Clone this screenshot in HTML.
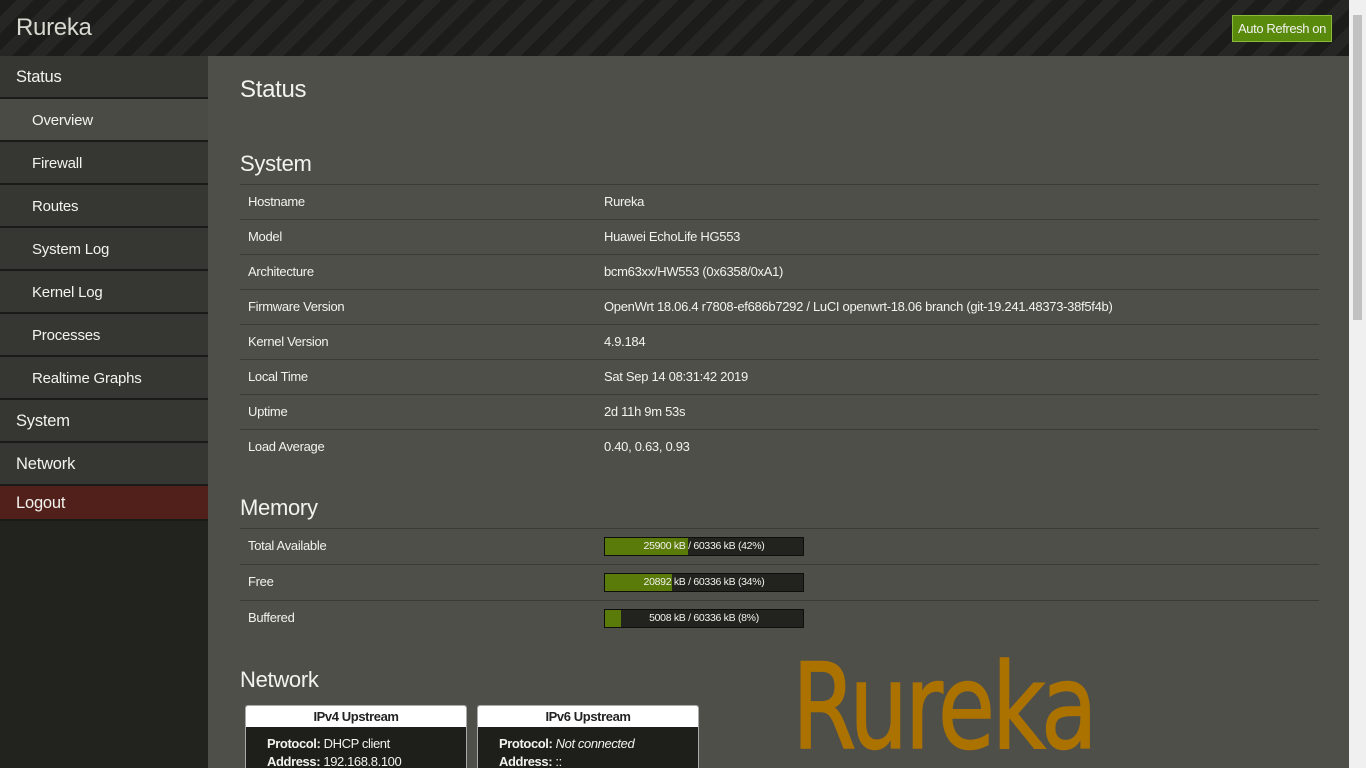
<!DOCTYPE html>
<html><head><meta charset="utf-8"><style>
*{margin:0;padding:0;box-sizing:border-box}
html,body{width:1366px;height:768px;overflow:hidden}
body{background:#4f4f4a;font-family:"Liberation Sans",sans-serif;color:#f2f2ee;position:relative}
.hdr{position:absolute;left:0;top:0;width:1349px;height:56px;background:repeating-linear-gradient(135deg,#1c1c1a 0 12px,#262624 12px 24px)}
.hdr .t{position:absolute;left:16px;top:14px;font-size:24px;color:#d8d8d0;letter-spacing:-.3px}
.btn{position:absolute;left:1232px;top:15px;width:100px;height:27px;background:#5a8a0c;border:1px solid #8bbb3a;color:#f2f2ee;font-size:13px;line-height:25px;text-align:center;letter-spacing:-.4px}
.side{position:absolute;left:0;top:56px;width:208px;height:712px;background:#22221f}
.it{position:absolute;left:0;width:208px;background:#363632;border-bottom:2px solid #1a1a18;font-size:15px;letter-spacing:-.2px}
.it.sub{padding-left:32px}
.it.top{padding-left:16px;font-size:16.5px}
h1{position:absolute;left:240px;top:76px;font-size:24px;font-weight:normal;letter-spacing:-.3px}
h2{position:absolute;left:240px;font-size:22px;font-weight:normal;letter-spacing:-.3px}
.row{position:absolute;left:240px;width:1079px;height:35px;border-top:1px solid #3a3a36;font-size:13px;letter-spacing:-.3px}
.row .k{position:absolute;left:8px;top:9px}
.row .v{position:absolute;left:364px;top:9px}
.bar{position:absolute;left:604px;width:200px;height:19px;background:#22221f;border:1px solid #0e0e0c;font-size:10.5px;text-align:center;line-height:17px;letter-spacing:-.3px}
.bar i{position:absolute;left:0;top:0;bottom:0;background:#5a7a0a}
.bar span{position:relative}
.card{position:absolute;top:705px;width:222px;height:63px;background:#1e1e1b;border:1px solid #aaa;border-bottom:none;border-radius:3px 3px 0 0;overflow:hidden}
.card .h{background:#fff;color:#222;font-weight:bold;font-size:13px;text-align:center;height:21px;line-height:21px;letter-spacing:-.4px}
.card .b{padding:8px 0 0 21px;font-size:13px;line-height:18px;letter-spacing:-.4px}
.big{position:absolute;left:792px;top:649px;font-family:"DejaVu Sans",sans-serif;font-size:119px;color:#ac7200;-webkit-text-stroke:1.5px #ac7200;transform:scaleX(.78);transform-origin:left top;letter-spacing:-4px;line-height:1;white-space:nowrap}
.sb{position:absolute;left:1349px;top:0;width:17px;height:768px;background:#f0f0f0}
.sb .th{position:absolute;left:4px;top:15px;width:9px;height:305px;background:#c1c1c1}
</style></head><body>
<div class="hdr"><div class="t">Rureka</div><div class="btn">Auto Refresh on</div></div>
<div class="side">
<div class="it top" style="top:0;height:43px;line-height:43px">Status</div>
<div class="it sub" style="top:43px;height:43px;line-height:43px;background:#4b4b46">Overview</div>
<div class="it sub" style="top:86px;height:43px;line-height:43px">Firewall</div>
<div class="it sub" style="top:129px;height:43px;line-height:43px">Routes</div>
<div class="it sub" style="top:172px;height:43px;line-height:43px">System Log</div>
<div class="it sub" style="top:215px;height:43px;line-height:43px">Kernel Log</div>
<div class="it sub" style="top:258px;height:43px;line-height:43px">Processes</div>
<div class="it sub" style="top:301px;height:43px;line-height:43px">Realtime Graphs</div>
<div class="it top" style="top:344px;height:43px;line-height:43px">System</div>
<div class="it top" style="top:387px;height:43px;line-height:43px">Network</div>
<div class="it top" style="top:430px;height:35px;line-height:35px;background:#52201b">Logout</div>
</div>
<h1>Status</h1>
<h2 style="top:151px">System</h2>
<div class="row" style="top:184px"><span class="k">Hostname</span><span class="v">Rureka</span></div>
<div class="row" style="top:219px"><span class="k">Model</span><span class="v">Huawei EchoLife HG553</span></div>
<div class="row" style="top:254px"><span class="k">Architecture</span><span class="v">bcm63xx/HW553 (0x6358/0xA1)</span></div>
<div class="row" style="top:289px"><span class="k">Firmware Version</span><span class="v">OpenWrt 18.06.4 r7808-ef686b7292 / LuCI openwrt-18.06 branch (git-19.241.48373-38f5f4b)</span></div>
<div class="row" style="top:324px"><span class="k">Kernel Version</span><span class="v">4.9.184</span></div>
<div class="row" style="top:359px"><span class="k">Local Time</span><span class="v">Sat Sep 14 08:31:42 2019</span></div>
<div class="row" style="top:394px"><span class="k">Uptime</span><span class="v">2d 11h 9m 53s</span></div>
<div class="row" style="top:429px"><span class="k">Load Average</span><span class="v">0.40, 0.63, 0.93</span></div>
<h2 style="top:495px">Memory</h2>
<div class="row" style="top:528px;height:36px"><span class="k">Total Available</span></div>
<div class="row" style="top:564px;height:36px"><span class="k">Free</span></div>
<div class="row" style="top:600px;height:36px"><span class="k">Buffered</span></div>
<div class="bar" style="top:537px"><i style="width:42%"></i><span>25900 kB / 60336 kB (42%)</span></div>
<div class="bar" style="top:573px"><i style="width:34%"></i><span>20892 kB / 60336 kB (34%)</span></div>
<div class="bar" style="top:609px"><i style="width:8%"></i><span>5008 kB / 60336 kB (8%)</span></div>
<h2 style="top:667px">Network</h2>
<div class="card" style="left:245px"><div class="h">IPv4 Upstream</div><div class="b"><b>Protocol:</b> DHCP client<br><b>Address:</b> 192.168.8.100</div></div>
<div class="card" style="left:477px"><div class="h">IPv6 Upstream</div><div class="b"><b>Protocol:</b> <i>Not connected</i><br><b>Address:</b> ::</div></div>
<div class="big">Rureka</div>
<div class="sb"><div class="th"></div></div>
</body></html>
